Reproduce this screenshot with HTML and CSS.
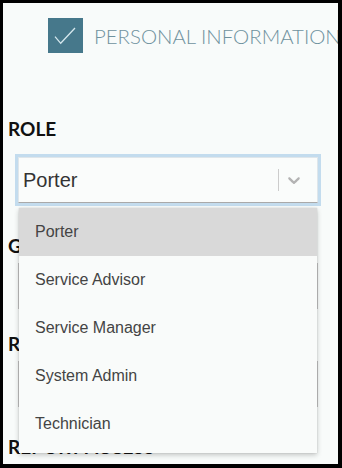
FILE: index.html
```html
<!DOCTYPE html>
<html>
<head>
<meta charset="utf-8">
<link rel="stylesheet" href="styles.css">
</head>
<body>
<div class="page">
  <div class="header">
    <div class="check">
      <svg width="35" height="35" viewBox="0 0 35 35"><path d="M7 18.7 L12.7 25.3 L27 10" fill="none" stroke="#d6e8ee" stroke-width="1.3"/></svg>
    </div>
    <div class="title">PERSONAL INFORMATION</div>
  </div>
  <div class="form">
    <div class="label label-role">ROLE</div>
    <div class="select-wrap">
      <div class="select">
        <div class="value">Porter</div>
        <div class="sep"></div>
        <div class="indicator">
          <svg width="20" height="20" viewBox="0 0 20 20"><path fill="#b3b3b3" d="M4.516 7.548c0.436-0.446 1.043-0.481 1.576 0l3.908 3.747 3.908-3.747c0.533-0.481 1.141-0.446 1.574 0 0.436 0.445 0.408 1.197 0 1.615-0.406 0.418-4.695 4.502-4.695 4.502-0.217 0.223-0.502 0.335-0.787 0.335s-0.57-0.112-0.789-0.335c0 0-4.287-4.084-4.695-4.502s-0.436-1.170 0-1.615z"/></svg>
        </div>
      </div>
      <div class="menu">
        <div class="item active">Porter</div>
        <div class="item">Service Advisor</div>
        <div class="item">Service Manager</div>
        <div class="item">System Admin</div>
        <div class="item">Technician</div>
      </div>
    </div>
    <div class="label label-group">GROUP</div>
    <div class="input"></div>
    <div class="label label-region">REGION</div>
    <div class="input"></div>
    <div class="label label-report">REPORT ACCESS</div>
  </div>
</div>
</body>
</html>
```
FILE: styles.css
```css
html { background: #000; }
body { margin: 0; }
.page {
  margin: 3px 4px 4px 3px;
  height: 461px;
  background: #f8fbfa;
  overflow: hidden;
  padding: 15px 0 0 5px;
  box-sizing: border-box;
}
.header {
  display: flex;
  align-items: center;
  gap: 11px;
  padding-left: 40px;
  white-space: nowrap;
}
.check {
  width: 35px;
  height: 35px;
  flex: none;
  background: #46788b;
}
.check svg { display: block; }
.title {
  font-family: Lato, sans-serif;
  font-weight: 300;
  font-size: 20.4px;
  color: #6f929e;
}
.form { margin-top: 64px; }
.label {
  font-family: Lato, sans-serif;
  font-weight: 700;
  font-size: 19px;
  line-height: 24px;
  color: #111;
}
.label-role { margin-bottom: 16px; }
.label-group { margin-top: 31px; margin-bottom: 5px; }
.label-region { margin-top: 23px; margin-bottom: 5px; }
.label-report { margin-top: 28px; }
.select-wrap {
  position: relative;
  margin-left: 10px;
  width: 300px;
}
.select {
  height: 46px;
  box-sizing: border-box;
  border: 1px solid #dfe6ea;
  border-bottom-color: #a9a9a9;
  box-shadow: 0 0 0 3px #c3dcee;
  background: #fafcfb;
  display: flex;
  align-items: center;
  font-family: "Liberation Sans", Arial, sans-serif;
  font-size: 20px;
  color: #333;
}
.value { flex: 1; padding-left: 4px; }
.sep {
  width: 1px;
  height: 22px;
  background: #ccc;
}
.indicator { padding: 0 13px 0 5px; display: flex; }
.menu {
  position: absolute;
  top: 51px;
  left: 1px;
  width: 298px;
  background: #f9fbfa;
  box-shadow: 0 2px 5px rgba(0,0,0,0.22), 0 0 1px rgba(0,0,0,0.2);
  padding-bottom: 5px;
  z-index: 2;
}
.item {
  height: 48px;
  display: flex;
  align-items: center;
  padding-left: 16px;
  font-family: "Liberation Sans", Arial, sans-serif;
  font-size: 16px;
  color: #444;
}
.item.active { background: #d9d9d9; }
.input {
  margin-left: 10px;
  width: 300px;
  height: 46px;
  box-sizing: border-box;
  border: 1px solid #c4c4c4;
}
```
